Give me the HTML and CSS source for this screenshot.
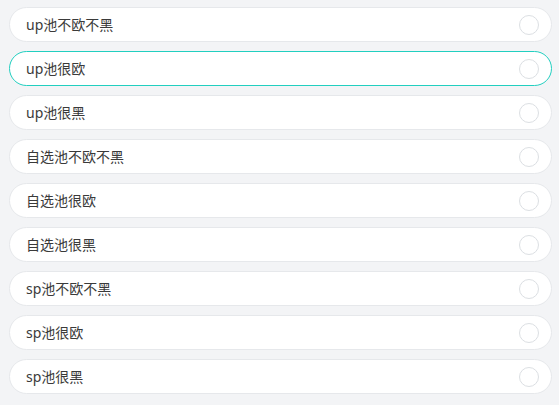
FILE: index.html
```html
<!DOCTYPE html>
<html lang="zh">
<head>
    <meta charset="UTF-8">
    <meta name="viewport" content="width=device-width, initial-scale=1.0">
    <title>选择</title>
    <link rel="stylesheet" href="styles.css">
</head>
<body>
    <div class="option-list">
        <div class="option"><span class="option-label">up池不欧不黑</span><span class="radio"></span></div>
        <div class="option active"><span class="option-label">up池很欧</span><span class="radio"></span></div>
        <div class="option"><span class="option-label">up池很黑</span><span class="radio"></span></div>
        <div class="option"><span class="option-label">自选池不欧不黑</span><span class="radio"></span></div>
        <div class="option"><span class="option-label">自选池很欧</span><span class="radio"></span></div>
        <div class="option"><span class="option-label">自选池很黑</span><span class="radio"></span></div>
        <div class="option"><span class="option-label">sp池不欧不黑</span><span class="radio"></span></div>
        <div class="option"><span class="option-label">sp池很欧</span><span class="radio"></span></div>
        <div class="option"><span class="option-label">sp池很黑</span><span class="radio"></span></div>
    </div>
</body>
</html>
```

FILE: styles.css
```css
* {
    margin: 0;
    padding: 0;
    box-sizing: border-box;
}

body {
    background-color: #f3f4f6;
    font-family: "Noto Sans", "Noto Sans CJK SC", sans-serif;
    color: #3a3a3a;
}

.option-list {
    display: flex;
    flex-direction: column;
    gap: 9px;
    padding: 7px 7px 0 9px;
}

.option {
    height: 35px;
    display: flex;
    align-items: center;
    justify-content: space-between;
    background-color: #fff;
    border: 1px solid #e6e8eb;
    border-radius: 18px;
    padding: 0 12px 0 16px;
}

.option.active {
    border-color: #22cfc0;
}

.option-label {
    font-size: 14px;
    line-height: 1;
}

.radio {
    width: 20px;
    height: 20px;
    border: 1px solid #dcdfe3;
    border-radius: 50%;
    background-color: #fff;
}
```
